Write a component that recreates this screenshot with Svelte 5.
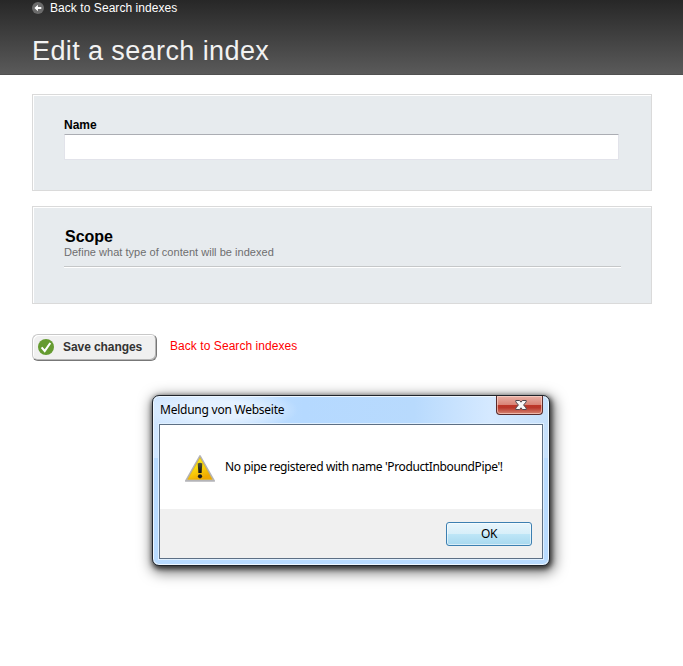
<script lang="ts">
  let name = $state("");
  let dialogOpen = $state(true);

  const message = "No pipe registered with name 'ProductInboundPipe'!";

  function closeDialog() {
    dialogOpen = false;
  }
</script>

<div class="page">
  <header>
    <a class="back" href="#indexes">
      <svg width="12" height="12" viewBox="0 0 12 12">
        <circle cx="6" cy="6" r="6" fill="#6b6b6b" />
        <path d="M2.4 6 5.9 2.8v2.3H9.3v1.8H5.9v2.3z" fill="#fff" />
      </svg>
      <span class="back-text">Back to Search indexes</span>
    </a>
    <h1>Edit a search index</h1>
  </header>

  <main>
    <section class="panel name-panel">
      <label for="name">Name</label>
      <input id="name" type="text" bind:value={name} />
    </section>

    <section class="panel scope-panel">
      <h2>Scope</h2>
      <p>Define what type of content will be indexed</p>
      <div class="rule"></div>
    </section>

    <div class="actions">
      <button class="save" type="button">
        <svg width="16" height="16" viewBox="0 0 16 16">
          <circle cx="8" cy="8" r="8" fill="#659b30" />
          <path d="M3.6 8.4 6.7 12 12.3 4" fill="none" stroke="#fff" stroke-width="2.1" />
        </svg>
        <span class="save-text">Save changes</span>
      </button>
      <a class="cancel" href="#indexes">Back to Search indexes</a>
    </div>
  </main>

  {#if dialogOpen}
    <div class="dialog" role="alertdialog" aria-label="Meldung von Webseite">
      <div class="titlebar">
        <span class="title">Meldung von Webseite</span>
        <button class="close" type="button" aria-label="Close" onclick={closeDialog}>
          <svg width="12" height="10" viewBox="0 0 12 10">
            <path
              d="M.8.5h3.8L6 2.2 7.4.5h3.8v1.4L8.6 5l2.6 3.1v1.4H7.4L6 7.8 4.6 9.5H.8V8.1L3.4 5 .8 1.9z"
              fill="#f8f8f8"
              stroke="#51494f"
              stroke-width="1"
            />
          </svg>
        </button>
      </div>
      <div class="client">
        <div class="body">
          <svg class="warning" width="32" height="29" viewBox="0 0 32 29">
            <defs>
              <linearGradient id="amber" x1="0" y1="0" x2="0.5" y2="1">
                <stop offset="0" stop-color="#f4ee20" />
                <stop offset="0.5" stop-color="#fbdc10" />
                <stop offset="1" stop-color="#f0a800" />
              </linearGradient>
              <linearGradient id="mark" x1="0" y1="0" x2="0" y2="1">
                <stop offset="0" stop-color="#55563a" />
                <stop offset="1" stop-color="#0c0d12" />
              </linearGradient>
            </defs>
            <path
              d="M16 2 30.2 26.9H1.8z"
              fill="#d9d9d9"
              stroke="#b4b4b8"
              stroke-width="1.7"
              stroke-linejoin="round"
            />
            <path
              d="M16 3.6 28.3 25.4H3.7z"
              fill="url(#amber)"
              stroke="#d9a500"
              stroke-width=".5"
              stroke-linejoin="round"
            />
            <path d="M13.7 9.4q2.3-1.4 4.6 0L17.6 19h-3.2z" fill="url(#mark)" />
            <circle cx="16" cy="22.3" r="2.1" fill="#16171a" />
          </svg>
          <span class="message">{message}</span>
        </div>
        <div class="footer">
          <button class="ok" type="button" onclick={closeDialog}>OK</button>
        </div>
      </div>
    </div>
  {/if}
</div>

<style>
  :global(body) {
    margin: 0;
    background: #fff;
  }

  .page {
    position: relative;
    height: 666px;
    overflow: hidden;
    font-family: "Liberation Sans", Arial, sans-serif;
    font-size: 12px;
    color: #000;
  }

  .page * {
    box-sizing: border-box;
  }

  svg {
    display: block;
    flex: none;
  }

  a {
    text-decoration: none;
  }

  header {
    height: 75px;
    padding: 1px 32px 0;
    background: linear-gradient(#272727, #5a5a5a);
    border-bottom: 1px solid #505050;
  }

  .back {
    display: flex;
    align-items: center;
    gap: 6px;
    height: 14px;
    color: #fff;
    line-height: 14px;
  }

  .back-text,
  .cancel {
    letter-spacing: 0.06px;
  }

  h1 {
    margin: 20px 0 0;
    font-size: 27px;
    font-weight: normal;
    line-height: 32px;
    letter-spacing: 0.4px;
    color: #f2f2f2;
  }

  main {
    padding: 19px 31px 0 32px;
  }

  /* grey frame with a white highlight inside the top and left edges */
  .panel {
    background: #e7ebee;
    border: 1px solid #dadada;
    box-shadow: inset 1px 1px #fff;
  }

  .name-panel {
    height: 97px;
    padding: 22px 31px 0;
  }

  label {
    display: block;
    height: 17px;
    font-weight: bold;
    line-height: 16px;
  }

  input {
    display: block;
    width: 555px;
    height: 26px;
    padding: 2px 4px;
    border: 1px solid #e2e3ea;
    border-top-color: #abadb3;
    border-radius: 1px;
    background: #fff;
    outline: none;
  }

  .scope-panel {
    height: 98px;
    margin-top: 15px;
    padding: 20px 30px 0 31px;
  }

  h2 {
    margin: 0 0 0 1px;
    font-size: 16px;
    line-height: 19px;
  }

  p {
    margin: 0;
    font-size: 11px;
    line-height: 13px;
    letter-spacing: 0.03px;
    color: #6e6e6e;
  }

  .rule {
    height: 2px;
    margin-top: 7px;
    background: #c5c7c8;
    border-bottom: 1px solid #fff;
  }

  .actions {
    display: flex;
    margin-top: 30px;
  }

  .save {
    display: flex;
    align-items: center;
    gap: 9px;
    width: 125px;
    height: 27px;
    padding: 0 0 1px 5px;
    border: 1px solid;
    border-color: #c8c8c8 #777 #777 #c8c8c8;
    border-radius: 6px;
    background: #f0f0f0;
    box-shadow:
      inset 1px 1px #fff,
      inset -1px -1px #b5b5b5;
    font: bold 12px "Liberation Sans", Arial, sans-serif;
    color: #333;
    white-space: nowrap;
  }

  .save-text {
    letter-spacing: -0.07px;
  }

  .cancel {
    margin-left: 13px;
    line-height: 24px;
    color: #f00;
  }

  .dialog {
    position: absolute;
    left: 152px;
    top: 395px;
    width: 398px;
    height: 171px;
    padding: 0 6px 6px;
    border: 1px solid #20252c;
    border-radius: 7px;
    background:
      radial-gradient(ellipse 80px 22px at 65px 14px, #e4f1ff 40%, transparent) no-repeat,
      linear-gradient(90deg, #d0e6ff, #b5d9ff 38%, #b8dafd 66%, #d5e9ff 85%, #c6e0fb) 0 0 / 100% 62px no-repeat,
      #b9dbff;
    box-shadow:
      inset 0 0 0 1px #eef7ff,
      1px 2px 5px 1px rgba(0, 0, 0, 0.65),
      2px 4px 13px 3px rgba(0, 0, 0, 0.5);
    font-family: "Noto Sans", "Segoe UI", sans-serif;
    font-size: 12px;
  }

  .titlebar {
    display: flex;
    justify-content: space-between;
    height: 28px;
  }

  .title {
    padding-left: 1px;
    line-height: 28px;
    letter-spacing: -0.24px;
  }

  .close {
    display: flex;
    align-items: center;
    justify-content: center;
    width: 47px;
    height: 19px;
    padding: 0 0 0 2px;
    border: 1px solid #592b2b;
    border-top: 0;
    border-radius: 0 0 4px 4px;
    background: linear-gradient(#e9b1a6, #d98477 48%, #bd3627 50%, #b9372a 65%, #d68674);
    box-shadow: inset 0 0 0 1px rgba(255, 220, 210, 0.6);
  }

  .client {
    height: 135px;
    border: 1px solid #5d6f84;
    background: #f0f0f0;
    box-shadow: 0 0 0 1px #e0f0ff;
  }

  .body {
    display: flex;
    align-items: flex-start;
    height: 84px;
    padding: 29px 0 0 24px;
    background: #fff;
  }

  .message {
    margin-left: 9px;
    line-height: 26px;
    letter-spacing: -0.37px;
    white-space: nowrap;
  }

  .footer {
    display: flex;
    justify-content: flex-end;
    padding: 13px 10px 0 0;
  }

  .ok {
    width: 86px;
    height: 24px;
    padding: 0 0 1px;
    border: 1px solid #3c7fb1;
    border-radius: 3px;
    background: linear-gradient(#e8f5fc, #d8eff9 48%, #bee6f7 50%, #a8d8ef);
    box-shadow: inset 0 0 0 1px rgba(255, 255, 255, 0.55);
    font: 12px "Noto Sans", "Segoe UI", sans-serif;
    letter-spacing: -0.4px;
    color: #000;
  }
</style>
